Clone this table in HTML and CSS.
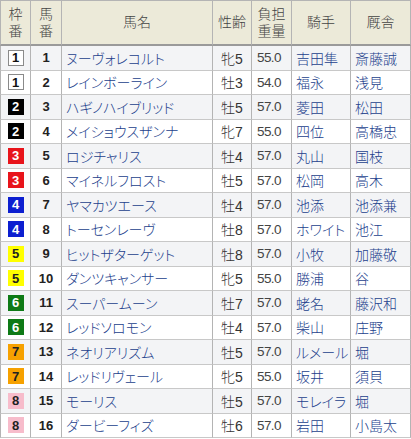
FILE: index.html
```html
<!DOCTYPE html>
<html lang="ja">
<head>
<meta charset="utf-8">
<link rel="stylesheet" href="styles.css">
</head>
<body>
<div class="tbl">
  <div class="h first">枠<br>番</div>
  <div class="h">馬<br>番</div>
  <div class="h">馬名</div>
  <div class="h">性齢</div>
  <div class="h">負担<br>重量</div>
  <div class="h">騎手</div>
  <div class="h">厩舎</div>

  <div class="c first odd"><span class="w w1">1</span></div><div class="c num odd">1</div><div class="c name odd">ヌーヴォレコルト</div><div class="c sa odd">牝5</div><div class="c wt odd">55.0</div><div class="c link odd">吉田隼</div><div class="c link odd">斎藤誠</div>
  <div class="c first"><span class="w w1">1</span></div><div class="c num">2</div><div class="c name">レインボーライン</div><div class="c sa">牡3</div><div class="c wt">54.0</div><div class="c link">福永</div><div class="c link">浅見</div>
  <div class="c first odd"><span class="w w2">2</span></div><div class="c num odd">3</div><div class="c name odd">ハギノハイブリッド</div><div class="c sa odd">牡5</div><div class="c wt odd">57.0</div><div class="c link odd">菱田</div><div class="c link odd">松田</div>
  <div class="c first"><span class="w w2">2</span></div><div class="c num">4</div><div class="c name">メイショウスザンナ</div><div class="c sa">牝7</div><div class="c wt">55.0</div><div class="c link">四位</div><div class="c link">高橋忠</div>
  <div class="c first odd"><span class="w w3">3</span></div><div class="c num odd">5</div><div class="c name odd">ロジチャリス</div><div class="c sa odd">牡4</div><div class="c wt odd">57.0</div><div class="c link odd">丸山</div><div class="c link odd">国枝</div>
  <div class="c first"><span class="w w3">3</span></div><div class="c num">6</div><div class="c name">マイネルフロスト</div><div class="c sa">牡5</div><div class="c wt">57.0</div><div class="c link">松岡</div><div class="c link">高木</div>
  <div class="c first odd"><span class="w w4">4</span></div><div class="c num odd">7</div><div class="c name odd">ヤマカツエース</div><div class="c sa odd">牡4</div><div class="c wt odd">57.0</div><div class="c link odd">池添</div><div class="c link odd">池添兼</div>
  <div class="c first"><span class="w w4">4</span></div><div class="c num">8</div><div class="c name">トーセンレーヴ</div><div class="c sa">牡8</div><div class="c wt">57.0</div><div class="c link">ホワイト</div><div class="c link">池江</div>
  <div class="c first odd"><span class="w w5">5</span></div><div class="c num odd">9</div><div class="c name odd">ヒットザターゲット</div><div class="c sa odd">牡8</div><div class="c wt odd">57.0</div><div class="c link odd">小牧</div><div class="c link odd">加藤敬</div>
  <div class="c first"><span class="w w5">5</span></div><div class="c num">10</div><div class="c name">ダンツキャンサー</div><div class="c sa">牝5</div><div class="c wt">55.0</div><div class="c link">勝浦</div><div class="c link">谷</div>
  <div class="c first odd"><span class="w w6">6</span></div><div class="c num odd">11</div><div class="c name odd">スーパームーン</div><div class="c sa odd">牡7</div><div class="c wt odd">57.0</div><div class="c link odd">蛯名</div><div class="c link odd">藤沢和</div>
  <div class="c first"><span class="w w6">6</span></div><div class="c num">12</div><div class="c name">レッドソロモン</div><div class="c sa">牡4</div><div class="c wt">57.0</div><div class="c link">柴山</div><div class="c link">庄野</div>
  <div class="c first odd"><span class="w w7">7</span></div><div class="c num odd">13</div><div class="c name odd">ネオリアリズム</div><div class="c sa odd">牡5</div><div class="c wt odd">57.0</div><div class="c link odd">ルメール</div><div class="c link odd">堀</div>
  <div class="c first"><span class="w w7">7</span></div><div class="c num">14</div><div class="c name">レッドリヴェール</div><div class="c sa">牝5</div><div class="c wt">55.0</div><div class="c link">坂井</div><div class="c link">須貝</div>
  <div class="c first odd"><span class="w w8">8</span></div><div class="c num odd">15</div><div class="c name odd">モーリス</div><div class="c sa odd">牡5</div><div class="c wt odd">57.0</div><div class="c link odd">モレイラ</div><div class="c link odd">堀</div>
  <div class="c first"><span class="w w8">8</span></div><div class="c num">16</div><div class="c name">ダービーフィズ</div><div class="c sa">牡6</div><div class="c wt">57.0</div><div class="c link">岩田</div><div class="c link">小島太</div>
</div>
</body>
</html>
```

FILE: styles.css
```css
html, body {
  margin: 0;
  padding: 0;
  background: #ffffff;
}
body {
  font-family: "Liberation Sans", "Noto Sans CJK JP", sans-serif;
  font-size: 13px;
  font-weight: 300;
  color: #333333;
}
.tbl {
  display: grid;
  grid-template-columns: 31px 31px 151px 39px 40px 59px 60px;
  grid-template-rows: 46px;
  grid-auto-rows: 24.5px;
  width: 411px;
}
.tbl > div {
  box-sizing: border-box;
  border-right: 1px solid #b4b4b4;
  border-bottom: 1px solid #c8c8c8;
  display: flex;
  align-items: center;
  white-space: nowrap;
  overflow: hidden;
}
.tbl > .first {
  border-left: 1px solid #b4b4b4;
}
.h {
  background: #ecead9;
  border-top: 1px solid #b4b4b4;
  border-bottom: 2px solid #9a9a9a !important;
  justify-content: center;
  text-align: center;
  line-height: 17px;
  font-size: 14px;
  color: #444;
}
.c.odd {
  background: #f3f4f6;
}
.c.first {
  justify-content: center;
}
.num {
  justify-content: center;
  font-weight: bold;
  font-size: 13px;
  color: #222;
}
.name {
  padding-left: 4px;
  color: #22408c;
  font-size: 14px;
  font-feature-settings: "palt";
}
.sa {
  justify-content: center;
  font-size: 14px;
  color: #333;
}
.wt {
  padding-left: 5px;
  letter-spacing: -0.6px;
  font-size: 13.5px;
  color: #444;
}
.link {
  padding-left: 4px;
  color: #22408c;
  font-size: 14px;
  font-feature-settings: "palt";
}
.w {
  box-sizing: border-box;
  width: 16px;
  height: 16px;
  display: flex;
  align-items: center;
  justify-content: center;
  font-weight: bold;
  font-size: 13px;
  line-height: 1;
}
.w1 { background: #ffffff; border: 1px solid #8a8a8a; color: #111; }
.w2 { background: #000000; color: #ffffff; }
.w3 { background: #e8141b; color: #ffffff; }
.w4 { background: #0c1fd0; color: #ffffff; }
.w5 { background: #ffff00; color: #222; }
.w6 { background: #0e7a16; color: #ffffff; }
.w7 { background: #f6a100; color: #222; }
.w8 { background: #f7bccb; color: #222; }
```
